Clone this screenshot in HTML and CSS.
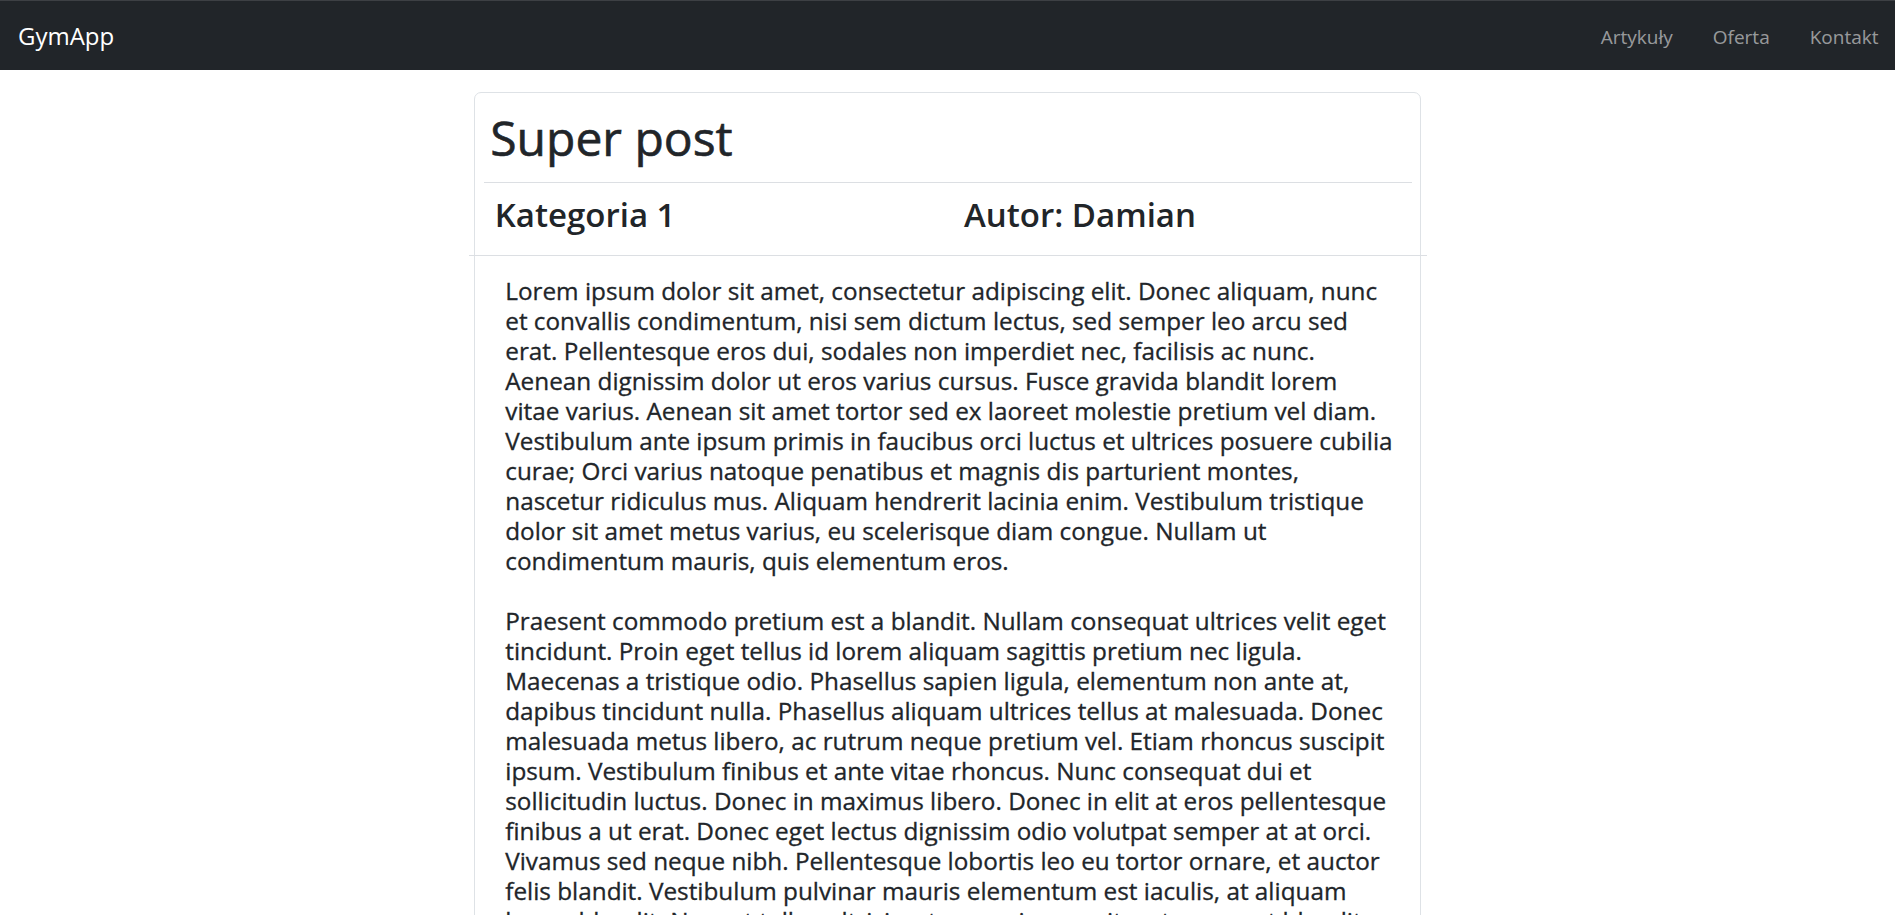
FILE: index.html
```html
<!DOCTYPE html>
<html lang="pl">
<head>
<meta charset="utf-8">
<title>GymApp</title>
<link rel="stylesheet" href="styles.css">
</head>
<body>
<nav class="navbar">
  <a class="brand" href="#">GymApp</a>
  <ul class="nav-links">
    <li><a href="#">Artykuły</a></li>
    <li><a href="#">Oferta</a></li>
    <li><a href="#">Kontakt</a></li>
  </ul>
</nav>
<main class="page">
  <article class="post-card">
    <header class="post-header">
      <h1 class="post-title">Super post</h1>
    </header>
    <hr class="title-rule">
    <div class="post-meta">
      <h3 class="meta-item">Kategoria 1</h3>
      <h3 class="meta-item">Autor: Damian</h3>
    </div>
    <hr class="meta-rule">
    <div class="post-body">
      <p class="post-text">Lorem ipsum dolor sit amet, consectetur adipiscing elit. Donec aliquam, nunc<br>et convallis condimentum, nisi sem dictum lectus, sed semper leo arcu sed<br>erat. Pellentesque eros dui, sodales non imperdiet nec, facilisis ac nunc.<br>Aenean dignissim dolor ut eros varius cursus. Fusce gravida blandit lorem<br>vitae varius. Aenean sit amet tortor sed ex laoreet molestie pretium vel diam.<br>Vestibulum ante ipsum primis in faucibus orci luctus et ultrices posuere cubilia<br>curae; Orci varius natoque penatibus et magnis dis parturient montes,<br>nascetur ridiculus mus. Aliquam hendrerit lacinia enim. Vestibulum tristique<br>dolor sit amet metus varius, eu scelerisque diam congue. Nullam ut<br>condimentum mauris, quis elementum eros.</p>
      <p class="post-text">Praesent commodo pretium est a blandit. Nullam consequat ultrices velit eget<br>tincidunt. Proin eget tellus id lorem aliquam sagittis pretium nec ligula.<br>Maecenas a tristique odio. Phasellus sapien ligula, elementum non ante at,<br>dapibus tincidunt nulla. Phasellus aliquam ultrices tellus at malesuada. Donec<br>malesuada metus libero, ac rutrum neque pretium vel. Etiam rhoncus suscipit<br>ipsum. Vestibulum finibus et ante vitae rhoncus. Nunc consequat dui et<br>sollicitudin luctus. Donec in maximus libero. Donec in elit at eros pellentesque<br>finibus a ut erat. Donec eget lectus dignissim odio volutpat semper at at orci.<br>Vivamus sed neque nibh. Pellentesque lobortis leo eu tortor ornare, et auctor<br>felis blandit. Vestibulum pulvinar mauris elementum est iaculis, at aliquam<br>lorem blandit. Nam et tellus ultricies, tempor ipsum vitae, tempus et blandit.</p>
    </div>
  </article>
</main>
</body>
</html>
```
FILE: styles.css
```css
* {
  box-sizing: border-box;
}

html, body {
  margin: 0;
  padding: 0;
}

body {
  font-family: "Open Sans", "Noto Sans", "Liberation Sans", sans-serif;
  color: #212529;
  background: #ffffff;
  overflow: hidden;
}

/* ---------- navbar ---------- */
.navbar {
  height: 70px;
  background: #212529;
  border-top: 1px solid #3d4044;
  display: flex;
  align-items: flex-start;
  justify-content: space-between;
  padding: 0 16.5px 0 18px;
}

.brand {
  margin-top: 19.7px;
  font-size: 24px;
  line-height: 30px;
  color: #ffffff;
  text-decoration: none;
}

.nav-links {
  margin: 20.6px 0 0 0;
  padding: 0;
  list-style: none;
  display: flex;
  gap: 40px;
}

.nav-links a {
  font-size: 19px;
  line-height: 30px;
  color: rgba(255, 255, 255, 0.55);
  text-decoration: none;
}

/* ---------- page ---------- */
.page {
  display: grid;
  grid-template-columns: 1fr 2fr 1fr;
  padding-top: 22px;
}

.post-card {
  grid-column: 2;
  border: 1px solid #dee2e6;
  border-radius: 7px;
  min-height: 1000px;
  background: #ffffff;
}

.post-header {
  padding: 15.4px 13px 0 15.5px;
}

.post-title {
  margin: 0;
  font-size: 48px;
  line-height: 60px;
  font-weight: 400;
  -webkit-text-stroke: 0.6px #212529;
}

.title-rule {
  margin: 13.6px 8.25px 0 9.25px;
  border: 0;
  border-top: 1px solid #dcdfe3;
  height: 0;
}

.post-meta {
  display: grid;
  grid-template-columns: 1fr 1fr;
  padding-top: 11px;
}

.meta-item {
  margin: 0;
  padding-left: 20px;
  font-size: 33px;
  line-height: 42px;
  font-weight: 600;
}

.meta-item + .meta-item {
  padding-left: 16.5px;
}

.meta-rule {
  margin: 19px -6.75px 0 -5.75px;
  border: 0;
  border-top: 1px solid #dcdfe3;
  height: 0;
}

.post-body {
  padding: 20.4px 25px 0 30.5px;
}

.post-text {
  margin: 0 0 30px 0;
  font-size: 24.3px;
  line-height: 30px;
  font-weight: 400;
  white-space: nowrap;
  -webkit-text-stroke: 0.3px #212529;
}
```
